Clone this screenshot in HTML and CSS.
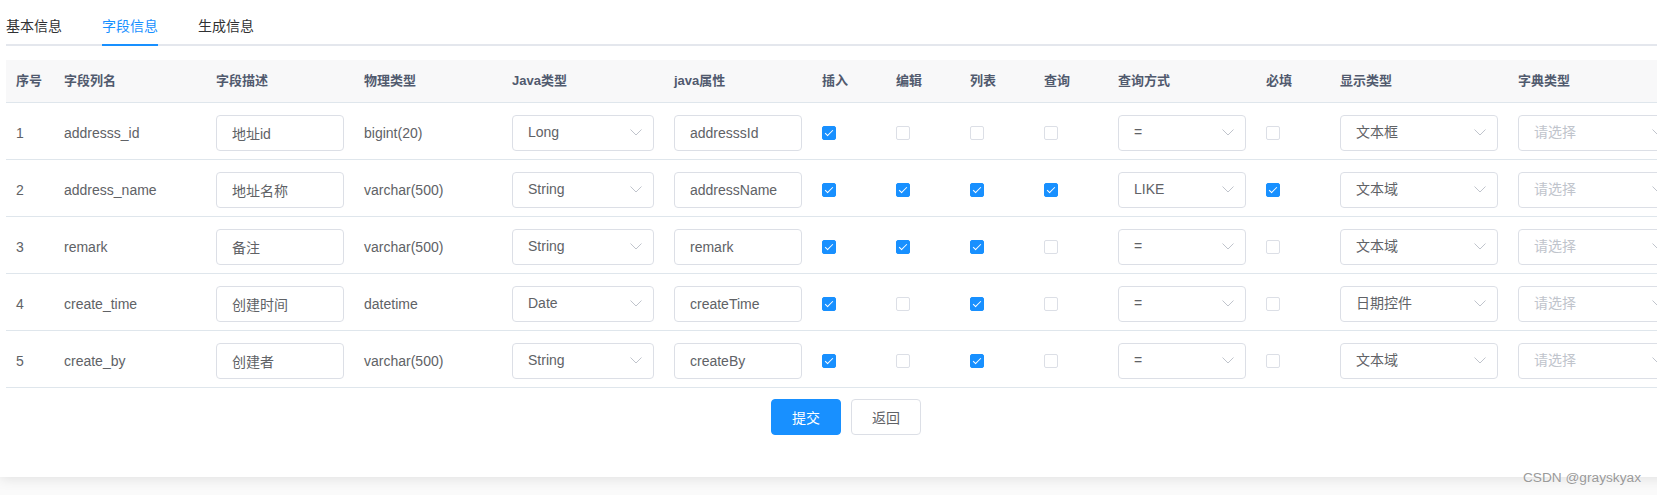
FILE: index.html
```
<!DOCTYPE html>
<html lang="zh-CN">
<head>
    <meta charset="UTF-8">
    <meta name="viewport" content="width=device-width, initial-scale=1.0">
    <title>修改生成配置</title>
    <link rel="stylesheet" href="styles.css">
</head>
<body>
    <div class="card">
        <!-- Tabs -->
        <div class="tabs-header">
            <div class="tab-item"><span class="tab-label">基本信息</span></div>
            <div class="tab-item active"><span class="tab-label">字段信息</span></div>
            <div class="tab-item"><span class="tab-label">生成信息</span></div>
        </div>

        <!-- Column table -->
        <table class="field-table">
            <colgroup>
                <col style="width:48px">
                <col style="width:152px">
                <col style="width:148px">
                <col style="width:148px">
                <col style="width:162px">
                <col style="width:148px">
                <col style="width:74px">
                <col style="width:74px">
                <col style="width:74px">
                <col style="width:74px">
                <col style="width:148px">
                <col style="width:74px">
                <col style="width:178px">
                <col style="width:178px">
            </colgroup>
            <thead>
                <tr>
                    <th><div class="cell">序号</div></th>
                    <th><div class="cell">字段列名</div></th>
                    <th><div class="cell">字段描述</div></th>
                    <th><div class="cell">物理类型</div></th>
                    <th><div class="cell">Java类型</div></th>
                    <th><div class="cell">java属性</div></th>
                    <th><div class="cell">插入</div></th>
                    <th><div class="cell">编辑</div></th>
                    <th><div class="cell">列表</div></th>
                    <th><div class="cell">查询</div></th>
                    <th><div class="cell">查询方式</div></th>
                    <th><div class="cell">必填</div></th>
                    <th><div class="cell">显示类型</div></th>
                    <th><div class="cell">字典类型</div></th>
                </tr>
            </thead>
            <tbody>
                <tr>
                    <td><div class="cell text">1</div></td>
                    <td><div class="cell text">addresss_id</div></td>
                    <td><div class="cell"><input class="input" value="地址id"></div></td>
                    <td><div class="cell text">bigint(20)</div></td>
                    <td><div class="cell"><div class="select"><span>Long</span><svg class="arrow" width="12" height="7" viewBox="0 0 12 7"><polyline points="0.5,0.5 6,6 11.5,0.5"/></svg></div></div></td>
                    <td><div class="cell"><input class="input" value="addresssId"></div></td>
                    <td><div class="cell"><span class="checkbox checked"></span></div></td>
                    <td><div class="cell"><span class="checkbox"></span></div></td>
                    <td><div class="cell"><span class="checkbox"></span></div></td>
                    <td><div class="cell"><span class="checkbox"></span></div></td>
                    <td><div class="cell"><div class="select"><span>=</span><svg class="arrow" width="12" height="7" viewBox="0 0 12 7"><polyline points="0.5,0.5 6,6 11.5,0.5"/></svg></div></div></td>
                    <td><div class="cell"><span class="checkbox"></span></div></td>
                    <td><div class="cell"><div class="select"><span>文本框</span><svg class="arrow" width="12" height="7" viewBox="0 0 12 7"><polyline points="0.5,0.5 6,6 11.5,0.5"/></svg></div></div></td>
                    <td><div class="cell"><div class="select"><span class="placeholder">请选择</span><svg class="arrow" width="12" height="7" viewBox="0 0 12 7"><polyline points="0.5,0.5 6,6 11.5,0.5"/></svg></div></div></td>
                </tr>
                <tr>
                    <td><div class="cell text">2</div></td>
                    <td><div class="cell text">address_name</div></td>
                    <td><div class="cell"><input class="input" value="地址名称"></div></td>
                    <td><div class="cell text">varchar(500)</div></td>
                    <td><div class="cell"><div class="select"><span>String</span><svg class="arrow" width="12" height="7" viewBox="0 0 12 7"><polyline points="0.5,0.5 6,6 11.5,0.5"/></svg></div></div></td>
                    <td><div class="cell"><input class="input" value="addressName"></div></td>
                    <td><div class="cell"><span class="checkbox checked"></span></div></td>
                    <td><div class="cell"><span class="checkbox checked"></span></div></td>
                    <td><div class="cell"><span class="checkbox checked"></span></div></td>
                    <td><div class="cell"><span class="checkbox checked"></span></div></td>
                    <td><div class="cell"><div class="select"><span>LIKE</span><svg class="arrow" width="12" height="7" viewBox="0 0 12 7"><polyline points="0.5,0.5 6,6 11.5,0.5"/></svg></div></div></td>
                    <td><div class="cell"><span class="checkbox checked"></span></div></td>
                    <td><div class="cell"><div class="select"><span>文本域</span><svg class="arrow" width="12" height="7" viewBox="0 0 12 7"><polyline points="0.5,0.5 6,6 11.5,0.5"/></svg></div></div></td>
                    <td><div class="cell"><div class="select"><span class="placeholder">请选择</span><svg class="arrow" width="12" height="7" viewBox="0 0 12 7"><polyline points="0.5,0.5 6,6 11.5,0.5"/></svg></div></div></td>
                </tr>
                <tr>
                    <td><div class="cell text">3</div></td>
                    <td><div class="cell text">remark</div></td>
                    <td><div class="cell"><input class="input" value="备注"></div></td>
                    <td><div class="cell text">varchar(500)</div></td>
                    <td><div class="cell"><div class="select"><span>String</span><svg class="arrow" width="12" height="7" viewBox="0 0 12 7"><polyline points="0.5,0.5 6,6 11.5,0.5"/></svg></div></div></td>
                    <td><div class="cell"><input class="input" value="remark"></div></td>
                    <td><div class="cell"><span class="checkbox checked"></span></div></td>
                    <td><div class="cell"><span class="checkbox checked"></span></div></td>
                    <td><div class="cell"><span class="checkbox checked"></span></div></td>
                    <td><div class="cell"><span class="checkbox"></span></div></td>
                    <td><div class="cell"><div class="select"><span>=</span><svg class="arrow" width="12" height="7" viewBox="0 0 12 7"><polyline points="0.5,0.5 6,6 11.5,0.5"/></svg></div></div></td>
                    <td><div class="cell"><span class="checkbox"></span></div></td>
                    <td><div class="cell"><div class="select"><span>文本域</span><svg class="arrow" width="12" height="7" viewBox="0 0 12 7"><polyline points="0.5,0.5 6,6 11.5,0.5"/></svg></div></div></td>
                    <td><div class="cell"><div class="select"><span class="placeholder">请选择</span><svg class="arrow" width="12" height="7" viewBox="0 0 12 7"><polyline points="0.5,0.5 6,6 11.5,0.5"/></svg></div></div></td>
                </tr>
                <tr>
                    <td><div class="cell text">4</div></td>
                    <td><div class="cell text">create_time</div></td>
                    <td><div class="cell"><input class="input" value="创建时间"></div></td>
                    <td><div class="cell text">datetime</div></td>
                    <td><div class="cell"><div class="select"><span>Date</span><svg class="arrow" width="12" height="7" viewBox="0 0 12 7"><polyline points="0.5,0.5 6,6 11.5,0.5"/></svg></div></div></td>
                    <td><div class="cell"><input class="input" value="createTime"></div></td>
                    <td><div class="cell"><span class="checkbox checked"></span></div></td>
                    <td><div class="cell"><span class="checkbox"></span></div></td>
                    <td><div class="cell"><span class="checkbox checked"></span></div></td>
                    <td><div class="cell"><span class="checkbox"></span></div></td>
                    <td><div class="cell"><div class="select"><span>=</span><svg class="arrow" width="12" height="7" viewBox="0 0 12 7"><polyline points="0.5,0.5 6,6 11.5,0.5"/></svg></div></div></td>
                    <td><div class="cell"><span class="checkbox"></span></div></td>
                    <td><div class="cell"><div class="select"><span>日期控件</span><svg class="arrow" width="12" height="7" viewBox="0 0 12 7"><polyline points="0.5,0.5 6,6 11.5,0.5"/></svg></div></div></td>
                    <td><div class="cell"><div class="select"><span class="placeholder">请选择</span><svg class="arrow" width="12" height="7" viewBox="0 0 12 7"><polyline points="0.5,0.5 6,6 11.5,0.5"/></svg></div></div></td>
                </tr>
                <tr>
                    <td><div class="cell text">5</div></td>
                    <td><div class="cell text">create_by</div></td>
                    <td><div class="cell"><input class="input" value="创建者"></div></td>
                    <td><div class="cell text">varchar(500)</div></td>
                    <td><div class="cell"><div class="select"><span>String</span><svg class="arrow" width="12" height="7" viewBox="0 0 12 7"><polyline points="0.5,0.5 6,6 11.5,0.5"/></svg></div></div></td>
                    <td><div class="cell"><input class="input" value="createBy"></div></td>
                    <td><div class="cell"><span class="checkbox checked"></span></div></td>
                    <td><div class="cell"><span class="checkbox"></span></div></td>
                    <td><div class="cell"><span class="checkbox checked"></span></div></td>
                    <td><div class="cell"><span class="checkbox"></span></div></td>
                    <td><div class="cell"><div class="select"><span>=</span><svg class="arrow" width="12" height="7" viewBox="0 0 12 7"><polyline points="0.5,0.5 6,6 11.5,0.5"/></svg></div></div></td>
                    <td><div class="cell"><span class="checkbox"></span></div></td>
                    <td><div class="cell"><div class="select"><span>文本域</span><svg class="arrow" width="12" height="7" viewBox="0 0 12 7"><polyline points="0.5,0.5 6,6 11.5,0.5"/></svg></div></div></td>
                    <td><div class="cell"><div class="select"><span class="placeholder">请选择</span><svg class="arrow" width="12" height="7" viewBox="0 0 12 7"><polyline points="0.5,0.5 6,6 11.5,0.5"/></svg></div></div></td>
                </tr>
            </tbody>
        </table>

        <!-- Form buttons -->
        <div class="form-actions">
            <button class="btn btn-primary">提交</button>
            <button class="btn btn-default">返回</button>
        </div>
    </div>

    <div class="watermark">CSDN @grayskyax</div>
</body>
</html>
```

FILE: styles.css
```
/* General Reset */
* {
    margin: 0;
    padding: 0;
    box-sizing: border-box;
}

body {
    font-family: "Liberation Sans", "Noto Sans CJK SC", sans-serif;
    font-size: 14px;
    color: #606266;
    background: #fafafa;
    width: 1657px;
    height: 495px;
    overflow: hidden;
    position: relative;
}

/* Card */
.card {
    width: 1686px;
    padding: 6px 0 20px 6px;
    background: #ffffff;
    box-shadow: 0 2px 12px 0 rgba(0, 0, 0, 0.1);
}

/* Tabs */
.tabs-header {
    display: flex;
    border-bottom: 2px solid #e4e7ed;
    margin-bottom: 14px;
}

.tab-item {
    height: 40px;
    margin-bottom: -2px;
    padding: 0 20px;
    color: #303133;
}

.tab-item:first-child {
    padding-left: 0;
}

.tab-label {
    display: block;
    height: 40px;
    line-height: 40px;
    border-bottom: 2px solid transparent;
}

.tab-item.active {
    color: #1890ff;
}

.tab-item.active .tab-label {
    border-bottom-color: #1890ff;
}

/* Table */
.field-table {
    width: 1680px;
    table-layout: fixed;
    border-collapse: collapse;
}

.field-table th {
    background: #f8f8f9;
    color: #515a6e;
    font-size: 13px;
    font-weight: bold;
    text-align: left;
    height: 42px;
    padding: 0;
    border-bottom: 1px solid #dfe6ec;
}

.field-table td {
    height: 57px;
    padding: 12px 0 8px;
    border-bottom: 1px solid #dfe6ec;
}

.cell {
    padding: 0 10px;
    line-height: 23px;
    white-space: nowrap;
    overflow: hidden;
}

.cell.text {
    padding-top: 2px;
}

/* Inputs */
.input {
    display: block;
    width: 100%;
    height: 36px;
    padding: 0 15px;
    border: 1px solid #dcdfe6;
    border-radius: 4px;
    font-family: inherit;
    font-size: 14px;
    color: #606266;
    background: #ffffff;
    outline: none;
}

.select {
    display: flex;
    align-items: center;
    justify-content: space-between;
    width: 100%;
    height: 36px;
    padding: 0 11px 0 15px;
    border: 1px solid #dcdfe6;
    border-radius: 4px;
    color: #606266;
    background: #ffffff;
}

.select .placeholder {
    color: #c0c4cc;
}

.arrow {
    fill: none;
    stroke: #c0c4cc;
    stroke-width: 1;
}

/* Checkbox */
.checkbox {
    display: block;
    position: relative;
    width: 14px;
    height: 14px;
    margin-top: 1px;
    border: 1px solid #dcdfe6;
    border-radius: 2px;
    background: #ffffff;
}

.checkbox.checked {
    background: #1890ff;
    border-color: #1890ff;
}

.checkbox.checked::after {
    content: '';
    position: absolute;
    left: 4px;
    top: 1px;
    width: 3px;
    height: 7px;
    border: 1px solid #ffffff;
    border-left: 0;
    border-top: 0;
    transform: rotate(45deg);
}

/* Buttons */
.form-actions {
    display: flex;
    justify-content: center;
    gap: 10px;
    width: 1680px;
    margin-top: 11px;
    margin-bottom: 22px;
}

.btn {
    width: 70px;
    height: 36px;
    border-radius: 4px;
    font-family: inherit;
    font-size: 14px;
    cursor: pointer;
}

.btn-primary {
    background: #1890ff;
    border: 1px solid #1890ff;
    color: #ffffff;
}

.btn-default {
    background: #ffffff;
    border: 1px solid #dcdfe6;
    color: #606266;
}

/* Watermark */
.watermark {
    position: absolute;
    right: 16px;
    top: 470px;
    font-size: 13.7px;
    color: #9a9a9a;
    text-shadow: 0 0 2px #ffffff;
}
```
